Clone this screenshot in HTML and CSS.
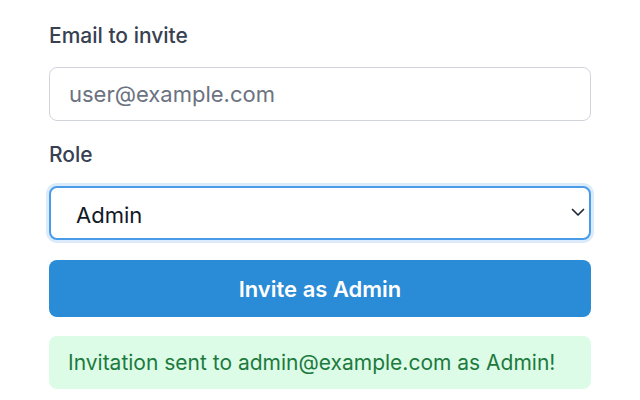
FILE: index.html
```html
<!DOCTYPE html>
<html lang="en">
<head>
    <meta charset="UTF-8">
    <meta name="viewport" content="width=device-width, initial-scale=1.0">
    <title>Invite member</title>
    <link rel="stylesheet" href="styles.css">
</head>
<body>
    <form class="invite-form">
        <div class="field">
            <label for="email">Email to invite</label>
            <input type="email" id="email" placeholder="user@example.com">
        </div>

        <div class="field">
            <label for="role">Role</label>
            <div class="select-wrap">
                <select id="role" class="role-select">
                    <option>Admin</option>
                    <option>Member</option>
                    <option>Viewer</option>
                </select>
                <svg class="chevron" width="14" height="9" viewBox="0 0 14 9" aria-hidden="true">
                    <path d="M1.5 1.5 L7 7 L12.5 1.5" fill="none" stroke="#1f2937" stroke-width="1.7" stroke-linecap="round" stroke-linejoin="round"/>
                </svg>
            </div>
        </div>

        <button type="button" class="invite-btn">Invite as Admin</button>

        <div class="alert-success">Invitation sent to admin@example.com as Admin!</div>
    </form>
</body>
</html>
```

FILE: styles.css
```css
:root {
    --label-color: #374151;
    --border-color: #d1d5db;
    --placeholder: #6b7280;
    --focus-border: #4a9be8;
    --focus-ring: #dcebfb;
    --primary: #2a8bd7;
    --success-bg: #dcfce7;
    --success-text: #1d7a3e;
}

* {
    box-sizing: border-box;
}

body {
    margin: 0;
    background: white;
    font-family: Inter, "Noto Sans", "Liberation Sans", sans-serif;
    color: #111827;
}

.invite-form {
    display: flex;
    flex-direction: column;
    padding: 22px 49px 0;
}

.field {
    display: flex;
    flex-direction: column;
    margin-bottom: 20px;
}

.field label {
    font-size: 21px;
    font-weight: 500;
    line-height: 28px;
    color: var(--label-color);
    margin-bottom: 17px;
}

.field input,
.role-select {
    width: 100%;
    height: 54px;
    border: 1px solid var(--border-color);
    border-radius: 8px;
    font-family: inherit;
    font-size: 22px;
    padding: 0 19px;
    background: white;
    color: #111827;
}

.field input::placeholder {
    color: var(--placeholder);
}

.select-wrap {
    position: relative;
}

.role-select {
    appearance: none;
    -webkit-appearance: none;
    border: 2px solid var(--focus-border);
    box-shadow: 0 0 0 3px var(--focus-ring);
    padding: 4px 19px 0 25px;
    outline: none;
}

.chevron {
    position: absolute;
    top: 22px;
    right: 6px;
}

.invite-btn {
    height: 57px;
    border: none;
    border-radius: 8px;
    background: var(--primary);
    color: white;
    font-family: inherit;
    font-size: 22px;
    font-weight: 600;
    cursor: pointer;
}

.alert-success {
    margin-top: 19px;
    height: 53px;
    display: flex;
    align-items: center;
    padding: 0 19px;
    border-radius: 8px;
    background: var(--success-bg);
    color: var(--success-text);
    font-size: 21px;
}
```
